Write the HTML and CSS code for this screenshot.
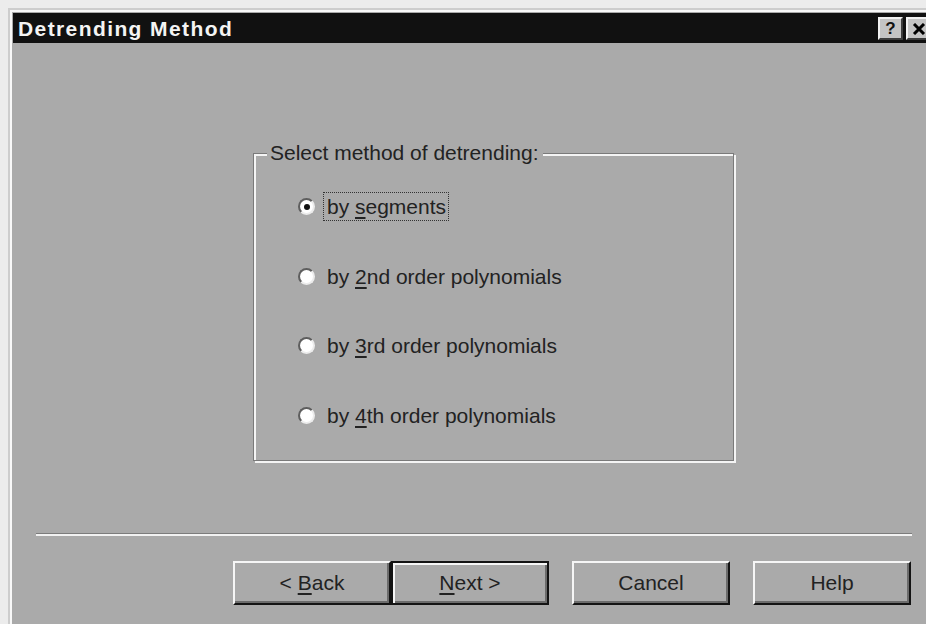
FILE: index.html
```html
<!DOCTYPE html>
<html lang="en">
<head>
<meta charset="utf-8">
<title>Detrending Method</title>
<link rel="stylesheet" href="styles.css">
</head>
<body>
<div class="window">
  <div class="titlebar">
    <span class="title">Detrending Method</span>
    <div class="caption-buttons">
      <span class="cap-btn cap-help">?</span>
      <span class="cap-btn cap-close">
        <svg width="14" height="12" viewBox="0 0 14 12"><path d="M2 1 L12 11 M12 1 L2 11" stroke="#000" stroke-width="3" fill="none"/></svg>
      </span>
    </div>
  </div>
  <div class="client">
    <div class="group">
      <div class="group-title">Select method of detrending:</div>
      <div class="options">
        <div class="option">
          <span class="radio checked"></span>
          <span class="label focused">by <u>s</u>egments</span>
        </div>
        <div class="option">
          <span class="radio"></span>
          <span class="label">by <u>2</u>nd order polynomials</span>
        </div>
        <div class="option">
          <span class="radio"></span>
          <span class="label">by <u>3</u>rd order polynomials</span>
        </div>
        <div class="option">
          <span class="radio"></span>
          <span class="label">by <u>4</u>th order polynomials</span>
        </div>
      </div>
    </div>
    <div class="separator"></div>
    <div class="buttons">
      <div class="btn-pair">
        <button class="btn">&lt; <u>B</u>ack</button>
        <button class="btn default"><u>N</u>ext &gt;</button>
      </div>
      <button class="btn">Cancel</button>
      <button class="btn">Help</button>
    </div>
  </div>
</div>
</body>
</html>
```
FILE: styles.css
```css
html, body {
  margin: 0;
  padding: 0;
}

body {
  background: #ececec;
  width: 926px;
  height: 624px;
  overflow: hidden;
  font-family: "Liberation Sans", Arial, sans-serif;
}

/* dialog frame, runs past the right and bottom of the view */
.window {
  margin: 8px 0 0 8px;
  width: 921px;
  height: 700px;
  border-top: 2px solid #cdcdcd;
  border-left: 2px solid #cdcdcd;
  padding: 3px 0 0 3px;
  box-shadow: inset 2px 2px 0 #f8f8f8;
  background: #aaaaaa;
}

.titlebar {
  height: 30px;
  background: #111111;
  display: flex;
  align-items: center;
  justify-content: space-between;
  padding-left: 5px;
}

.title {
  color: #f4f4f4;
  font-weight: bold;
  font-size: 21px;
  letter-spacing: 1.4px;
  line-height: 30px;
  padding-top: 2px;
}

.caption-buttons {
  display: flex;
  gap: 3px;
  margin-right: 3px;
  padding-top: 1px;
}

.cap-btn {
  width: 25px;
  height: 23px;
  box-sizing: border-box;
  background: #c4c4c4;
  border: 2px solid;
  border-color: #f2f2f2 #3c3c3c #3c3c3c #f2f2f2;
  display: flex;
  align-items: center;
  justify-content: center;
  font-weight: bold;
  font-size: 17px;
  color: #111;
}

.client {
  padding-top: 110px;
}

/* etched group box */
.group {
  margin-left: 240px;
  width: 479px;
  height: 306px;
  border: 1px solid #7a7a7a;
  box-shadow: inset 2px 2px 0 #f4f4f4, 2px 2px 0 #f4f4f4;
}

.group-title {
  margin: -13px 0 0 13px;
  width: fit-content;
  padding: 0 4px 0 3px;
  background: #aaaaaa;
  font-size: 21px;
  line-height: 24px;
  color: #222;
}

.options {
  display: flex;
  flex-direction: column;
  gap: 40.5px;
  padding: 27px 0 0 44px;
}

.option {
  display: flex;
  align-items: center;
  height: 29px;
}

.radio {
  width: 17px;
  height: 17px;
  box-sizing: border-box;
  border-radius: 50%;
  background: #ffffff;
  border: 2px solid;
  border-color: #5e5e5e #ececec #ececec #5e5e5e;
  display: flex;
  align-items: center;
  justify-content: center;
  margin-right: 8px;
}

.radio.checked::after {
  content: "";
  width: 6px;
  height: 6px;
  border-radius: 50%;
  background: #111;
}

.label {
  font-size: 21px;
  line-height: 25px;
  color: #222;
  padding: 1px 2px 1px 3px;
  border: 1px dotted transparent;
}

.label.focused {
  border-color: #333;
}

u {
  text-decoration-thickness: 2px;
  text-underline-offset: 3px;
}

.separator {
  margin: 72px 0 0 23px;
  width: 876px;
  height: 2px;
  border-top: 1px solid #7c7c7c;
  background: #f2f2f2;
}

.buttons {
  display: flex;
  gap: 23px;
  margin: 25px 0 0 220px;
}

.btn-pair {
  display: flex;
}

.btn {
  width: 158px;
  height: 44px;
  box-sizing: border-box;
  background: #aaaaaa;
  border: 2px solid;
  border-color: #f6f6f6 #141414 #141414 #f6f6f6;
  box-shadow: inset -2px -2px 0 #6c6c6c;
  font-family: "Liberation Sans", Arial, sans-serif;
  font-size: 21px;
  color: #222;
  padding: 0;
  margin: 0;
}

.btn.default {
  border-color: #141414;
  box-shadow: inset 2px 2px 0 #f6f6f6, inset -2px -2px 0 #6c6c6c;
}
```
